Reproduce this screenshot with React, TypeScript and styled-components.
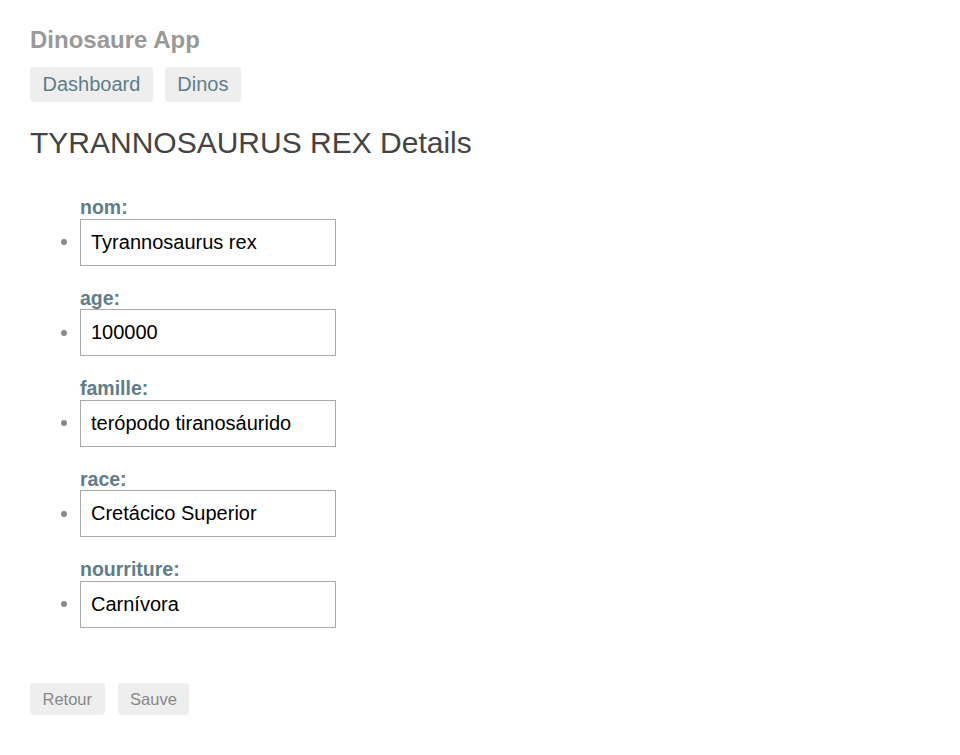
import React from "react";
import styled, { createGlobalStyle } from "styled-components";

const GlobalStyle = createGlobalStyle`
  html, body { margin: 0; padding: 0; background: #fff; }
  body { font-family: "Liberation Sans", Arial, sans-serif; color: #333; }
  * { box-sizing: border-box; }
`;

const Page = styled.div`
  padding: 26px 30px 30px 30px;
`;

const AppTitle = styled.h1`
  margin: 0;
  font-size: 24px;
  line-height: 27px;
  font-weight: bold;
  color: #999;
`;

const Nav = styled.nav`
  display: flex;
  gap: 12px;
  margin-top: 14px;
`;

const NavLink = styled.a`
  display: inline-block;
  padding: 6px 12.5px;
  background: #eee;
  border-radius: 4px;
  color: #607d8b;
  font-size: 20px;
  line-height: 23px;
  text-decoration: none;
`;

const DetailTitle = styled.h2`
  margin: 23px 0 0 0;
  font-size: 30px;
  line-height: 35px;
  font-weight: normal;
  color: #444;
`;

const FieldList = styled.ul`
  list-style: none;
  margin: 36px 0 0 0;
  padding: 0;
`;

const Field = styled.li`
  display: grid;
  grid-template-columns: 50px auto;
  align-items: center;
  margin-bottom: 21px;
`;

const Label = styled.label`
  grid-column: 2;
  display: block;
  font-size: 19.5px;
  line-height: 22.5px;
  font-weight: bold;
  color: #607d8b;
`;

const Bullet = styled.span`
  grid-column: 1;
  justify-self: end;
  margin-right: 13px;
  width: 6px;
  height: 6px;
  border-radius: 50%;
  background: #8a8a8a;
`;

const Input = styled.input`
  grid-column: 2;
  width: 256px;
  height: 47px;
  padding: 0 10px;
  border: 1px solid #a9a9a9;
  border-radius: 0;
  font-family: "Liberation Sans", Arial, sans-serif;
  font-size: 20px;
  color: #000;
  background: #fff;
  outline: none;
`;

const Actions = styled.div`
  display: flex;
  gap: 13px;
  margin-top: 34px;
  padding-top: 21px;
`;

const ActionButton = styled.button`
  padding: 7px 12.5px;
  border: none;
  border-radius: 4px;
  background: #eee;
  color: #888;
  font-family: "Liberation Sans", Arial, sans-serif;
  font-size: 16.5px;
  line-height: 18.5px;
  cursor: pointer;
`;

const fields = [
  { label: "nom:", value: "Tyrannosaurus rex" },
  { label: "age:", value: "100000" },
  { label: "famille:", value: "terópodo tiranosáurido" },
  { label: "race:", value: "Cretácico Superior" },
  { label: "nourriture:", value: "Carnívora" },
];

export default function App() {
  return (
    <Page>
      <GlobalStyle />
      <AppTitle>Dinosaure App</AppTitle>
      <Nav>
        <NavLink href="#">Dashboard</NavLink>
        <NavLink href="#">Dinos</NavLink>
      </Nav>
      <DetailTitle>TYRANNOSAURUS REX Details</DetailTitle>
      <FieldList>
        {fields.map((f) => (
          <Field key={f.label}>
            <Label>{f.label}</Label>
            <Bullet />
            <Input defaultValue={f.value} />
          </Field>
        ))}
      </FieldList>
      <Actions>
        <ActionButton>Retour</ActionButton>
        <ActionButton>Sauve</ActionButton>
      </Actions>
    </Page>
  );
}
